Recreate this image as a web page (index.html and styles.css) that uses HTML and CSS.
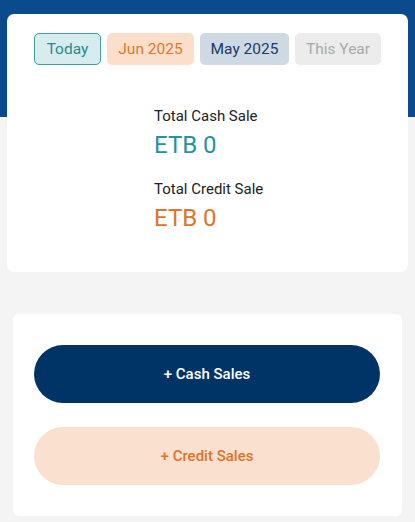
FILE: index.html
```html
<!DOCTYPE html>
<html lang="en">
<head>
  <meta charset="UTF-8">
  <meta name="viewport" content="width=device-width, initial-scale=1.0">
  <title>Sales</title>
  <link rel="stylesheet" href="styles.css">
</head>
<body>
  <div class="summary">
    <div class="chips">
      <span class="chip today">Today</span>
      <span class="chip jun">Jun 2025</span>
      <span class="chip may">May 2025</span>
      <span class="chip year">This Year</span>
    </div>
    <div class="stats">
      <p class="label">Total Cash Sale</p>
      <p class="amount cash">ETB 0</p>
      <p class="label">Total Credit Sale</p>
      <p class="amount credit">ETB 0</p>
    </div>
  </div>

  <div class="actions">
    <button class="btn btn_cash">+ Cash Sales</button>
    <button class="btn btn_credit">+ Credit Sales</button>
  </div>
</body>
</html>
```

FILE: styles.css
```css
* {margin: 0;padding: 0;box-sizing: border-box;}
body {
  font-family: Roboto, "Liberation Sans", sans-serif;
  background: linear-gradient(#0c4a8e 0 117px, #f4f4f4 117px);
  min-height: 522px;
  padding-top: 14px;
}
.summary {
  margin: 0 7px;
  height: 258px;
  background-color: #fff;
  border-radius: 7px;
  padding-top: 19px;
}
.chips {display: flex; justify-content: center; gap: 6px;}
.chip {
  height: 32px;
  display: flex;
  align-items: center;
  justify-content: center;
  border-radius: 5px;
  font-size: 15.5px;
}
.today {width: 67px; background-color: #d6ecee; border: 1.5px solid #3e9ea4; color: #2b878d;}
.jun {width: 87px; background-color: #fcdfcb; color: #e0772e;}
.may {width: 89px; background-color: #cfd9e4; color: #1b3a66;}
.year {width: 86px; background-color: #ececec; color: #a9a9a9;}
.stats {width: max-content; margin: 42px 0 0 147px;}
.label {font-size: 15px; color: #222; line-height: 18px;}
.amount {font-size: 24px; line-height: 28px; margin-top: 6px; margin-bottom: 21px;}
.cash {color: #22959b;}
.credit {color: #e0742a;}
.actions {
  margin: 42px 13px 0;
  background-color: #fff;
  border-radius: 6px;
  padding: 31px 22px 31px 21px;
  display: flex;
  flex-direction: column;
  gap: 24px;
}
.btn {
  height: 58px;
  border: none;
  border-radius: 29px;
  font-family: Roboto, "Liberation Sans", sans-serif;
  font-size: 15px;
  font-weight: 500;
}
.btn_cash {background-color: #013466; color: #fff;}
.btn_credit {background-color: #fae0cf; color: #e0722a;}
```
